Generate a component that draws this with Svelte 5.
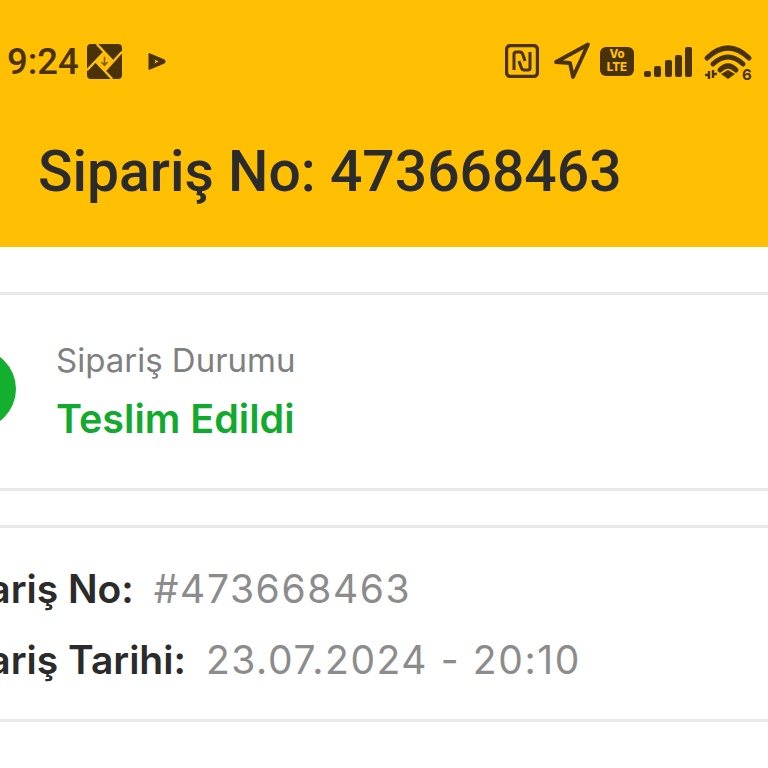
<script>
  const details = [
    { label: "Sipariş No:", value: "#473668463" },
    { label: "Sipariş Tarihi:", value: "23.07.2024 - 20:10" }
  ];
</script>

<div class="page">
  <header class="top">
    <div class="statusbar">
      <div class="status-left">
        <span class="time">9:24</span>
        <svg class="app-icon" viewBox="0 0 36 36">
          <rect width="36" height="36" rx="4" fill="#4a3208" />
          <path d="M0 27 L18 8 M10 0 L27 18 M18 28 L36 8 M9 18 L26 36" stroke="#ffc107" stroke-width="2.4" fill="none" />
          <path d="M18 8 L27 18 L18 28 L9 18Z" fill="#ffc107" />
          <path d="M18 13v9M14.8 18.5l3.2 3.5 3.2-3.5" stroke="#8a5a08" stroke-width="1.6" fill="none" />
        </svg>
        <svg class="play-icon" viewBox="0 0 18 18">
          <path d="M1 1 L16.5 7.5 Q18 9 16.5 10.5 L1 17 Z M5.5 6 L7 9 L5.5 12 L11.5 9Z" fill="#4a3208" fill-rule="evenodd" stroke="#4a3208" stroke-width="1" stroke-linejoin="round" />
        </svg>
      </div>
      <div class="status-right">
        <svg class="nfc" viewBox="0 0 34 34">
          <rect x="1.5" y="1.5" width="31" height="31" rx="4" fill="none" stroke="#4a3208" stroke-width="3.4" />
          <path d="M9 26V10Q9 8 11 8H15Q17 8 18 11L20 17" fill="none" stroke="#4a3208" stroke-width="3" />
          <path d="M25 8V24Q25 26 23 26H19Q17 26 16 23L14 17" fill="none" stroke="#4a3208" stroke-width="3" />
        </svg>
        <svg class="nav" viewBox="0 0 38 38">
          <path d="M35 2.5 L3 20 L17 21 L20 35Z" fill="none" stroke="#4a3208" stroke-width="3.8" stroke-linejoin="round" />
        </svg>
        <div class="volte"><span>Vo</span><span>LTE</span></div>
        <div class="signal">
          {#each [6, 11, 17, 22, 30] as h}
            <i style="height: {h}px"></i>
          {/each}
        </div>
        <svg class="wifi" viewBox="0 0 48 36">
          <path d="M3 15 Q24 -5 45 15 M9 21 Q24 7 39 21 M16 27 Q24 19 32 27" fill="none" stroke="#4a3208" stroke-width="5" stroke-linecap="round" />
          <path d="M24 27 L31 31 L24 36 L17 31Z" fill="#4a3208" />
          <path d="M5 28v8M1 32h4M9 27v8M9 31h4" fill="none" stroke="#4a3208" stroke-width="2.4" />
          <text x="38" y="37" class="wifi-six">6</text>
        </svg>
        <span class="battery-edge"></span>
      </div>
    </div>
    <h1>Sipariş No: 473668463</h1>
  </header>

  <section class="status">
    <span class="dot"></span>
    <div>
      <div class="status-label">Sipariş Durumu</div>
      <div class="status-value">Teslim Edildi</div>
    </div>
  </section>

  <section class="info">
    {#each details as row}
      <div class="row">
        <span class="label">{row.label}</span>
        <span class="value">{row.value}</span>
      </div>
    {/each}
  </section>
</div>

<style>
  :global(body) {
    margin: 0;
    background: #fff;
    overflow: hidden;
  }

  .page {
    width: 768px;
    height: 768px;
    overflow: hidden;
    font-family: Inter, "Noto Sans", sans-serif;
    background: #fff;
  }

  .top {
    height: 247px;
    background: #ffc003;
    box-sizing: border-box;
    padding-top: 41px;
  }

  .statusbar {
    display: flex;
    justify-content: space-between;
    align-items: center;
    height: 40px;
    color: #4a3208;
  }

  .status-left {
    display: flex;
    align-items: center;
    padding-left: 7px;
  }

  .time {
    font-family: Roboto, sans-serif;
    font-size: 36.5px;
    font-weight: 500;
  }

  .app-icon {
    width: 35px;
    height: 35px;
    margin-left: 8px;
  }

  .play-icon {
    width: 18px;
    height: 19px;
    margin-left: 26px;
  }

  .status-right {
    display: flex;
    align-items: center;
    margin-right: -8px;
  }

  .nfc {
    width: 34px;
    height: 34px;
  }

  .nav {
    width: 38px;
    height: 38px;
    margin-left: 14px;
  }

  .volte {
    width: 34px;
    height: 29px;
    margin-left: 9px;
    border-radius: 6px;
    background: #4a3208;
    color: #ffc107;
    display: flex;
    flex-direction: column;
    align-items: center;
    justify-content: center;
    font-size: 11.5px;
    font-weight: 800;
    line-height: 13px;
  }

  .signal {
    display: flex;
    align-items: flex-end;
    gap: 3.25px;
    margin-left: 10px;
    height: 32px;
  }

  .signal i {
    width: 7px;
    background: #4a3208;
    border-radius: 2px;
  }

  .wifi {
    width: 48px;
    height: 36px;
    margin-left: 12px;
    overflow: visible;
  }

  .wifi-six {
    font-size: 15px;
    font-weight: 700;
    fill: #4a3208;
  }

  .battery-edge {
    width: 8px;
    height: 26px;
    margin-left: 16px;
    background: #4a3208;
    border-radius: 3px 0 0 3px;
  }

  h1 {
    margin: 60px 0 0 38px;
    font-family: Roboto, sans-serif;
    font-size: 57px;
    line-height: 62px;
    font-weight: 500;
    color: #2b2b2b;
    white-space: nowrap;
  }

  .status {
    display: flex;
    align-items: center;
    gap: 15px;
    height: 193px;
    margin-top: 45px;
    margin-left: -40px;
    border-top: 3px solid #e9e9e9;
    border-bottom: 3px solid #e9e9e9;
  }

  .dot {
    width: 80px;
    height: 80px;
    border-radius: 50%;
    background: #12b02e;
    flex: none;
    margin-top: -6px;
    margin-left: -24px;
    margin-right: 25px;
  }

  .status-label {
    font-size: 33px;
    line-height: 40px;
    color: #808080;
  }

  .status-value {
    font-size: 39.5px;
    line-height: 46px;
    margin-top: 16px;
    font-weight: 600;
    color: #12aa2e;
  }

  .status > div {
    margin-top: -2px;
  }

  .info {
    margin-top: 34px;
    height: 197px;
    box-sizing: border-box;
    padding-top: 26px;
    border-top: 3px solid #e9e9e9;
    border-bottom: 3px solid #e9e9e9;
  }

  .row {
    display: flex;
    align-items: baseline;
    gap: 20px;
    height: 71px;
    margin-left: -72px;
    white-space: nowrap;
  }

  .label {
    font-size: 39px;
    line-height: 70px;
    font-weight: 600;
    color: #2b2b2b;
  }

  .value {
    font-size: 39px;
    line-height: 70px;
    letter-spacing: 1.6px;
    color: #8c8c8c;
  }
</style>
